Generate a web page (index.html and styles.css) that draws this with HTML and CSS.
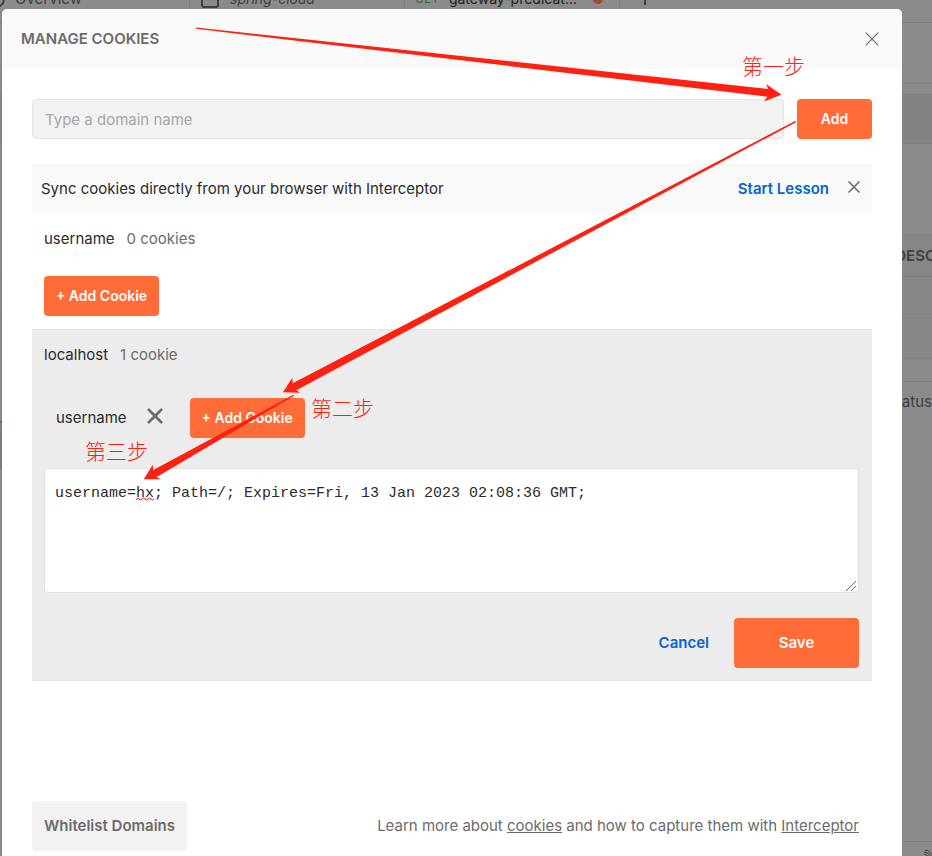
FILE: index.html
```html
<!DOCTYPE html>
<html lang="en">
<head>
<meta charset="utf-8">
<title>Manage Cookies</title>
<link rel="stylesheet" href="styles.css">
</head>
<body>
<div class="app">
  <div class="tabs">
    <div class="tab tab-overview"><svg class="tab-icon" viewBox="0 0 18 18"><circle cx="9" cy="9" r="8"/></svg><span>Overview</span></div>
    <div class="tab tab-cloud"><svg class="tab-icon" viewBox="0 0 18 18"><rect x="1" y="1" width="16" height="16" rx="2"/></svg><em>spring-cloud</em></div>
    <div class="tab tab-request"><span class="method">GET</span><span class="request-name">gateway-predicat...</span><span class="dot"></span></div>
    <div class="tab tab-new"><svg class="plus" viewBox="0 0 12 12"><path d="M6 0v12M0 6h12"/></svg></div>
  </div>
  <div class="row row-title"></div>
  <div class="row row-gap"></div>
  <div class="row row-url"></div>
  <div class="row row-options"></div>
  <div class="row row-head"><span>DESC</span></div>
  <div class="row row-param"></div>
  <div class="row row-param"></div>
  <div class="row row-space"></div>
  <div class="row row-response"><span>Status</span></div>
  <div class="response-tab"></div>
  <div class="response-bar"></div>
  <div class="status"><svg class="signal" viewBox="0 0 14 14"><circle cx="1.500" cy="10" r="1.500"/><circle cx="6.500" cy="10" r="1.500"/><path d="M6 5a6 6 0 0 1 5 5M6 3a8 8 0 0 1 7 7M7 1a9 9 0 0 1 8 8"/></svg></div>
</div>

<main class="modal">
  <header class="modal-head">
    <h1>MANAGE COOKIES</h1>
    <button class="icon-button" type="button" aria-label="Close"><svg class="close-large" viewBox="0 0 14 14"><path d="M.7.7l12.6 12.6M13.3.7L.7 13.3"/></svg></button>
  </header>
  <div class="modal-body">
    <form class="add-domain">
      <input class="domain-input" type="text" placeholder="Type a domain name" aria-label="Domain name">
      <button class="primary add" type="button">Add</button>
    </form>
    <div class="banner">
      <span>Sync cookies directly from your browser with Interceptor</span>
      <a class="lesson" href="#">Start Lesson</a>
      <button class="icon-button" type="button" aria-label="Dismiss"><svg class="close-small" viewBox="0 0 12 12"><path d="M.5.5l11 11M11.5.5L.5 11.500"/></svg></button>
    </div>
    <section class="domain">
      <div class="domain-head"><span>username</span><span class="count">0 cookies</span></div>
      <div class="cookies"><button class="primary add-cookie" type="button">+ Add Cookie</button></div>
    </section>
    <section class="domain domain-open">
      <div class="domain-head"><span>localhost</span><span class="count">1 cookie</span></div>
      <div class="cookies">
        <div class="cookie"><span>username</span><button class="icon-button" type="button" aria-label="Remove cookie"><svg class="close-cookie" viewBox="0 0 16 16"><path d="M1 1l14 14M15 1L1 15"/></svg></button></div>
        <button class="primary add-cookie" type="button">+ Add Cookie</button>
      </div>
      <div class="editor">
        <textarea class="cookie-text" spellcheck="false" aria-label="Cookie value">username=hx; Path=/; Expires=Fri, 13 Jan 2023 02:08:36 GMT;</textarea>
        <svg class="squiggle" viewBox="0 0 18 4"><path d="M0 3l1.5-2 3 2 3-2 3 2 3-2 3 2 1.500-1"/></svg>
        <svg class="grip" viewBox="0 0 12 12"><path d="M1 11L11 1M6 11l5-5"/></svg>
      </div>
      <div class="actions">
        <button class="cancel" type="button">Cancel</button>
        <button class="primary save" type="button">Save</button>
      </div>
    </section>
  </div>
  <footer class="modal-foot">
    <button class="whitelist" type="button">Whitelist Domains</button>
    <p>Learn more about <a href="#">cookies</a> and how to capture them with <a href="#">Interceptor</a></p>
  </footer>
</main>

<div class="notes">
  <svg class="arrows" viewBox="0 0 932 856">
    <path d="M196 27.500L768.300 89 766 84 781.500 94.700 764 101.500 767.300 96.700 196 28.800z"/>
    <path d="M795.500 120.800L292.700 383.300 292.300 377.700 283 392.300 300 392.700 296.300 390.300 796 122.200z"/>
    <path d="M293.300 394.800L153.300 470 152.700 464.700 143.700 479.300 161.300 479.300 156.300 477.300 293.700 396z"/>
  </svg>
  <span class="note note-one">第一步</span>
  <span class="note note-two">第二步</span>
  <span class="note note-three">第三步</span>
</div>
</body>
</html>
```

FILE: styles.css
```css
* { box-sizing: border-box; }

body {
  position: relative;
  margin: 0;
  height: 100vh;
  overflow: hidden;
  background: #8b8b8b;
  color: #2b2b2b;
  font: 15px/20px Inter, "Liberation Sans", sans-serif;
}

button, input, textarea { font: inherit; margin: 0; }
button { border: 0; padding: 0; cursor: pointer; background: none; }
svg { display: block; flex: none; }
path, .tab-icon { fill: none; stroke: #6b6b6b; }

/* Dimmed workspace */
.app { display: flex; flex-direction: column; height: 100vh; color: #404040; }
.tabs { display: flex; flex: none; height: 47px; margin-top: -24px; border-bottom: 1px solid #7f7f7f; }
.tab { display: flex; flex: none; align-items: center; border-right: 1px solid #7f7f7f; }
.tab-icon { width: 18px; height: 18px; stroke: #404040; stroke-width: 2; }
.tab-overview { width: 203px; margin-left: -13px; gap: 10px; }
.tab-cloud { width: 215px; padding-left: 11px; gap: 11px; font-size: 14px; }
.tab-request { width: 215px; padding-left: 10px; gap: 10px; font-size: 14px; }
.tab-new { padding-left: 19px; border: 0; }
.plus { width: 12px; height: 12px; }
.plus path { stroke: #404040; stroke-width: 2; }
.method { color: #2f6b43; font-size: 12px; }
.request-name { color: #212121; }
.dot { width: 10px; height: 10px; margin-left: 6px; border-radius: 50%; background: #a34a2a; }
.row { display: flex; align-items: center; justify-content: flex-end; flex: none; border-bottom: 1px solid #7f7f7f; }
.row-title { height: 61px; }
.row-gap { height: 11px; }
.row-url { height: 49px; background: #838383; }
.row-options { height: 91px; }
.row-head { height: 42px; margin-right: -4px; font-weight: 600; background: #878787; }
.row-param { height: 41px; background: #878787; }
.row-space { height: 23px; }
.row-response { height: 39px; border: 0; }
.response-tab { flex: none; height: 2px; width: 60px; background: #b04a27; }
.response-bar { flex: none; height: 46px; width: 60px; margin-top: 1px; background: #7e7e7e; }
.status { display: flex; justify-content: flex-end; margin-top: auto; height: 15px; padding-top: 7px; border-top: 1px solid #7f7f7f; }
.signal { width: 14px; height: 14px; }
.signal circle { fill: #404040; }
.signal path { stroke: #404040; }

/* Dialog */
.modal {
  position: absolute;
  inset: 9px 30px 0 2px;
  display: flex;
  flex-direction: column;
  background: #fff;
  border-radius: 5px 5px 0 0;
}
.modal-head {
  display: flex;
  align-items: center;
  justify-content: space-between;
  height: 60px;
  padding: 0 23px 0 19px;
  background: #f9f9f9;
  border-radius: 5px 5px 0 0;
}
h1 { margin: 0; font-size: 15px; line-height: 20px; font-weight: 600; color: #6b6b6b; }
.icon-button { display: block; flex: none; }
.close-large { width: 14px; height: 14px; }
.close-large path { stroke-width: 1.2; }
.close-small { width: 12px; height: 12px; }
.close-small path { stroke-width: 1.5; }
.close-cookie { width: 16px; height: 16px; }
.close-cookie path { stroke-width: 2.6; }

.modal-body { flex: 1; padding: 30px 30px 0; }
.add-domain { display: flex; gap: 13px; margin-bottom: 25px; }
.domain-input {
  flex: 1;
  min-width: 0;
  height: 40px;
  padding: 0 12px;
  border: 1px solid #e6e6e6;
  border-radius: 4px;
  background: #f2f2f2;
}
.domain-input::placeholder { color: #a6a6a6; opacity: 1; }
.primary { border-radius: 4px; background: #ff6c37; color: #fff; font-weight: 600; }
.add { width: 75px; font-size: 14px; }
.banner { display: flex; align-items: center; height: 50px; padding: 0 12px 0 9px; background: #f9f9f9; }
.lesson { margin: 0 19px 0 auto; color: #0265d2; font-weight: 600; text-decoration: none; }
.banner .icon-button { margin-bottom: 4px; }

.domain { padding: 0 13px 13px 12px; }
.domain-open { padding-bottom: 12px; border-top: 1px solid #e1e1e1; border-bottom: 1px solid #e1e1e1; background: #ececec; }
.domain-head { display: flex; align-items: center; gap: 12px; height: 50px; }
.count { color: #6b6b6b; }
.cookies { display: flex; padding-top: 12px; }
.cookie { display: flex; align-items: center; gap: 20px; padding-left: 12px; margin-right: 27px; }
.cookie .icon-button { margin-bottom: 5px; }
.add-cookie { width: 115px; height: 40px; font-size: 14px; }
.domain-open .cookies { padding-top: 18px; }
.editor { position: relative; margin: 30px 0 25px; }
.cookie-text {
  display: block;
  width: 100%;
  height: 125px;
  padding: 15px 10px;
  border: 1px solid #e1e1e1;
  border-radius: 4px;
  background: #fff;
  color: #2b2b2b;
  font-family: "Liberation Mono", monospace;
  resize: none;
}
.squiggle { position: absolute; left: 92px; top: 29px; width: 18px; height: 4px; }
.squiggle path { stroke: #f01818; }
.grip { position: absolute; right: 2px; bottom: 1px; width: 12px; height: 12px; }
.actions { display: flex; justify-content: flex-end; align-items: center; gap: 25px; }
.cancel { color: #0265d2; font-weight: 600; }
.save { width: 125px; height: 50px; }

.modal-foot { display: flex; align-items: center; justify-content: space-between; padding: 0 43px 5px 30px; }
.modal-foot p { margin: 0; color: #6b6b6b; }
.modal-foot a { color: inherit; }
.whitelist { height: 50px; padding: 0 12px; border-radius: 4px; background: #f2f2f2; color: #6b6b6b; font-weight: 600; }

/* Step notes drawn over the dialog */
.notes { position: absolute; inset: 0; pointer-events: none; }
.arrows { position: absolute; left: 0; top: 0; width: 932px; height: 856px; }
.arrows path { fill: #ff2010; stroke: none; }
.note { position: absolute; color: #ff2010; font: 300 21px/24px "Noto Sans CJK SC", sans-serif; white-space: nowrap; }
.note-one { left: 742px; top: 53px; }
.note-two { left: 311px; top: 395px; }
.note-three { left: 85px; top: 438px; }
```
